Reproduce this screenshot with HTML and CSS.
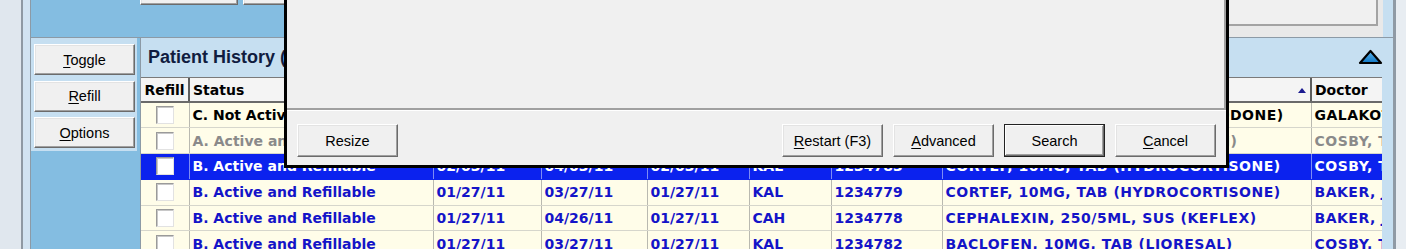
FILE: index.html
```html
<!DOCTYPE html>
<html lang="en">
<head>
    <meta charset="UTF-8">
    <meta name="viewport" content="width=device-width, initial-scale=1.0">
    <title>Patient History</title>
    <link rel="stylesheet" href="styles.css">
</head>

<body>
    <div class="window">
        <!-- left window frame -->
        <div class="frameLeft"></div>
        <div class="frameInner"></div>

        <div class="main">
            <!-- top form area -->
            <div class="topArea">
                <div class="topLeft">
                    <button class="btn"></button>
                    <button class="btn"></button>
                </div>
                <div class="notesPane">
                    <div class="notesBox"></div>
                </div>
                <div class="topEdge"></div>
            </div>

            <div class="lowerArea">
                <!-- side buttons -->
                <div class="sideCol">
                    <div class="sideButtons">
                        <button class="btn"><u>T</u>oggle</button>
                        <button class="btn"><u>R</u>efill</button>
                        <button class="btn"><u>O</u>ptions</button>
                    </div>
                </div>

                <!-- history grid -->
                <div class="historyPanel">
                    <div class="titleBar">
                        <span class="title">Patient History (6 items)</span>
                        <svg class="collapse" width="25" height="16" viewBox="0 0 25 16">
                            <defs>
                                <linearGradient id="tri" x1="0" y1="0" x2="0" y2="1">
                                    <stop offset="0" stop-color="#5cb4ee" />
                                    <stop offset="1" stop-color="#1077c4" />
                                </linearGradient>
                            </defs>
                            <path d="M12.5 2 L23 14 H2 Z" fill="url(#tri)" stroke="#000" stroke-width="2.2" stroke-linejoin="round" />
                        </svg>
                    </div>
                    <div class="gridWrap">
                        <table class="grid">
                            <colgroup>
                                <col class="cRefill">
                                <col class="cStatus">
                                <col class="cDate1">
                                <col class="cDate2">
                                <col class="cDate3">
                                <col class="cPharm">
                                <col class="cRx">
                                <col class="cDrug">
                                <col class="cDoctor">
                            </colgroup>
                            <thead>
                                <tr>
                                    <th class="center">Refill</th>
                                    <th>Status</th>
                                    <th>Filled</th>
                                    <th>Expires</th>
                                    <th>Last</th>
                                    <th>Pharm</th>
                                    <th>Rx #</th>
                                    <th>Drug<span class="sortUp"></span></th>
                                    <th>Doctor</th>
                                </tr>
                            </thead>
                            <tbody>
                                <tr class="inactive">
                                    <td class="center"><span class="check"></span></td>
                                    <td>C. Not Active</td>
                                    <td>11/14/10</td>
                                    <td>12/14/10</td>
                                    <td>11/14/10</td>
                                    <td>KAL</td>
                                    <td>1234701</td>
                                    <td class="wide">LORTAB, 5/500MG, TAB (HYDROCODONE)</td>
                                    <td class="wide">GALAKOTI, M</td>
                                </tr>
                                <tr class="pending">
                                    <td class="center"><span class="check"></span></td>
                                    <td>A. Active and Refillable</td>
                                    <td>02/03/11</td>
                                    <td>04/03/11</td>
                                    <td>02/03/11</td>
                                    <td>KAL</td>
                                    <td>1234784</td>
                                    <td class="wide">MOTRIN, 800MG, TAB (IBUPROFEN)</td>
                                    <td class="wide">COSBY, T</td>
                                </tr>
                                <tr class="active selected">
                                    <td class="center"><span class="check"></span></td>
                                    <td>B. Active and Refillable</td>
                                    <td>02/03/11</td>
                                    <td>04/03/11</td>
                                    <td>02/03/11</td>
                                    <td>KAL</td>
                                    <td>1234783</td>
                                    <td class="wide">CORTEF, 10MG, TAB (HYDROCORTISONE)</td>
                                    <td class="wide">COSBY, T</td>
                                </tr>
                                <tr class="active">
                                    <td class="center"><span class="check"></span></td>
                                    <td>B. Active and Refillable</td>
                                    <td>01/27/11</td>
                                    <td>03/27/11</td>
                                    <td>01/27/11</td>
                                    <td>KAL</td>
                                    <td>1234779</td>
                                    <td class="wide">CORTEF, 10MG, TAB (HYDROCORTISONE)</td>
                                    <td class="wide">BAKER, J</td>
                                </tr>
                                <tr class="active">
                                    <td class="center"><span class="check"></span></td>
                                    <td>B. Active and Refillable</td>
                                    <td>01/27/11</td>
                                    <td>04/26/11</td>
                                    <td>01/27/11</td>
                                    <td>CAH</td>
                                    <td>1234778</td>
                                    <td class="wide">CEPHALEXIN, 250/5ML, SUS (KEFLEX)</td>
                                    <td class="wide">BAKER, J</td>
                                </tr>
                                <tr class="active">
                                    <td class="center"><span class="check"></span></td>
                                    <td>B. Active and Refillable</td>
                                    <td>01/27/11</td>
                                    <td>03/27/11</td>
                                    <td>01/27/11</td>
                                    <td>KAL</td>
                                    <td>1234782</td>
                                    <td class="wide">BACLOFEN, 10MG, TAB (LIORESAL)</td>
                                    <td class="wide">COSBY, T</td>
                                </tr>
                            </tbody>
                        </table>
                    </div>
                </div>
            </div>
        </div>

        <!-- right window frame -->
        <div class="frameRight"></div>
    </div>

    <!-- search dialog over the grid -->
    <div class="dialog">
        <div class="dlgPane"></div>
        <div class="dlgButtons">
            <button class="btn">Resize</button>
            <span class="spacer"></span>
            <button class="btn"><u>R</u>estart (F3)</button>
            <button class="btn"><u>A</u>dvanced</button>
            <button class="btn default">Search</button>
            <button class="btn"><u>C</u>ancel</button>
        </div>
    </div>
</body>

</html>
```

FILE: styles.css
```css
* {
    padding: 0;
    margin: 0;
    box-sizing: border-box;
}

body {
    width: 1406px;
    height: 249px;
    overflow: hidden;
    position: relative;
    font-family: "Liberation Sans", Arial, sans-serif;
    background-color: #e4eaf0;
}

.window {
    display: flex;
    height: 249px;
}

.frameLeft {
    flex: 0 0 23px;
    background-color: #e0e7ee;
    border-right: 2px solid #8f99a3;
}

.frameInner {
    flex: 0 0 8px;
    background-color: #d2e3f1;
    border-right: 1px solid #8c9aa6;
}

.frameRight {
    flex: 0 0 13px;
    background-color: #e8edf2;
    border-left: 3px solid #8f9aa5;
}

.main {
    flex: 1;
    min-width: 0;
    display: flex;
    flex-direction: column;
}

/* buttons */
.btn {
    width: 101px;
    height: 31px;
    background-color: #f0f0f0;
    border: 1px solid;
    border-color: #ffffff #6b6b6b #6b6b6b #ffffff;
    box-shadow: inset -1px -1px 0 #a0a0a0, inset 1px 1px 0 #e3e3e3;
    font-family: "Liberation Sans", Arial, sans-serif;
    font-size: 14.5px;
    color: #000;
    flex-shrink: 0;
}

.btn u {
    text-decoration: underline;
    text-underline-offset: 2px;
}

.btn.default {
    border-color: #222;
    box-shadow: inset -1px -1px 0 #6b6b6b, inset 1px 1px 0 #fff, inset -2px -2px 0 #a0a0a0;
}

/* top form area */
.topArea {
    height: 38px;
    display: flex;
    border-bottom: 1px solid #8c9aa6;
}

.topLeft {
    flex: 1;
    display: flex;
    gap: 5px;
    padding-left: 109px;
    background-color: #84bde1;
}

.topLeft .btn {
    width: 98px;
    margin-top: -26px;
}

.notesPane {
    flex: 0 0 197px;
    background-color: #e9e9e9;
    padding-right: 5px;
}

.notesBox {
    height: 26px;
    background-color: #f0f0f0;
    border-right: 2px solid #a3a3a3;
    border-bottom: 2px solid #a3a3a3;
}

.topEdge {
    flex: 0 0 10px;
    background-color: #c6dff1;
}

/* lower area */
.lowerArea {
    flex: 1;
    display: flex;
    overflow: hidden;
}

.sideCol {
    flex: 0 0 109px;
    background-color: #84bde1;
}

.sideButtons {
    width: 106px;
    background-color: #c6dff1;
    padding: 6px 2px 3px 3px;
    display: flex;
    flex-direction: column;
    gap: 5.5px;
}

.historyPanel {
    flex: 1;
    min-width: 0;
    background-color: #c6dff1;
    border-left: 1px solid #8c9aa6;
    padding-right: 11px;
    display: flex;
    flex-direction: column;
}

.titleBar {
    height: 39px;
    flex-shrink: 0;
    margin-right: -11px;
    padding: 0 10px 0 7px;
    display: flex;
    align-items: center;
    justify-content: space-between;
}

.title {
    font-size: 18px;
    font-weight: bold;
    color: #101c40;
    white-space: nowrap;
}

.collapse {
    margin-top: -2px;
}

.gridWrap {
    flex: 1;
    overflow: hidden;
    background-color: #fffde9;
    border-top: 1px solid #7a7a7a;
}

.grid {
    table-layout: fixed;
    border-collapse: collapse;
    width: 1290px;
    font-family: "DejaVu Sans", Verdana, sans-serif;
    font-size: 14px;
    font-weight: bold;
}

.cRefill { width: 48px; }
.cStatus { width: 244px; }
.cDate1 { width: 108px; }
.cDate2 { width: 106px; }
.cDate3 { width: 102px; }
.cPharm { width: 82px; }
.cRx { width: 111px; }
.cDrug { width: 369px; }
.cDoctor { width: 120px; }

.grid th,
.grid td {
    white-space: nowrap;
    overflow: hidden;
    text-align: left;
    padding: 0 3px;
}

.grid th {
    height: 24px;
    background-color: #f4f4f4;
    color: #000;
    border-right: 2px solid #5e5e5e;
    border-bottom: 2px solid #6a6a6a;
}

.grid td {
    height: 25.8px;
    border-right: 1px solid #b9b9b0;
    border-bottom: 1px solid #d6d6cc;
}

.grid td.wide {
    letter-spacing: 0.5px;
}

.grid .center {
    text-align: center;
}

.sortUp {
    float: right;
    margin-top: 6px;
    margin-right: 1px;
    width: 0;
    height: 0;
    border-left: 4px solid transparent;
    border-right: 4px solid transparent;
    border-bottom: 5px solid #1a1a90;
}

.check {
    display: inline-block;
    width: 18px;
    height: 18px;
    vertical-align: middle;
    background-color: #fff;
    border: 1px solid;
    border-color: #9a9a9a #e2e2e2 #e2e2e2 #9a9a9a;
    box-shadow: inset 1px 1px 0 #c8c8c8;
}

.grid tr.inactive td {
    color: #000;
}

.grid tr.pending td {
    color: #8a8a8a;
}

.grid tr.active td {
    color: #1414c8;
}

.grid tr.selected td {
    background-color: #0b22ee;
    color: #fff;
    border-right-color: #7d8cf4;
    border-bottom-color: #0b22ee;
}

/* dialog */
.dialog {
    position: absolute;
    left: 284px;
    top: 0;
    width: 945px;
    height: 168px;
    background-color: #f0f0f0;
    border: 3px solid #000;
    border-top: 0;
    display: flex;
    flex-direction: column;
}

.dlgPane {
    height: 110px;
    border-right: 2px solid #a0a0a0;
    border-bottom: 2px solid #a0a0a0;
    box-shadow: 0 1px 0 #fff;
}

.dlgButtons {
    display: flex;
    gap: 10px;
    padding: 14px 10px 0 10px;
}

.dlgButtons .btn {
    height: 33px;
}

.spacer {
    flex: 1;
}
```
